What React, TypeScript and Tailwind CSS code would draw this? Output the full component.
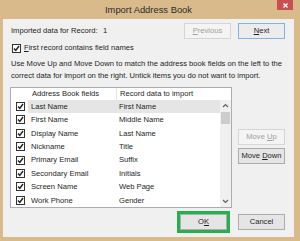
import React from "react";

const ROWS: [string, string][] = [
  ["Last Name", "First Name"],
  ["First Name", "Middle Name"],
  ["Display Name", "Last Name"],
  ["Nickname", "Title"],
  ["Primary Email", "Suffix"],
  ["Secondary Email", "Initials"],
  ["Screen Name", "Web Page"],
  ["Work Phone", "Gender"],
];

function Check() {
  return (
    <span className="flex h-[9px] w-[9px] shrink-0 items-center justify-center border border-[#333] bg-white">
      <svg width="7" height="7" viewBox="0 0 7 7">
        <path d="M1 3.5 L2.8 5.4 L6 1" fill="none" stroke="#222" strokeWidth="1.5" />
      </svg>
    </span>
  );
}

function Btn({
  label,
  u,
  disabled,
  def,
  className = "",
}: {
  label: string;
  u: number;
  disabled?: boolean;
  def?: boolean;
  className?: string;
}) {
  return (
    <div
      className={
        "flex h-[16px] w-[47px] items-center justify-center border " +
        (disabled
          ? "border-[#d5d5d5] bg-[#f4f4f4] text-[#a0a0a0] "
          : def
          ? "border-[#7eb4ea] bg-[#ececec] text-[#1e1e1e] "
          : "border-[#acacac] bg-[#e5e5e5] text-[#1e1e1e] ") +
        className
      }
    >
      <span className="whitespace-pre">
        {u < 0 ? (
          label
        ) : (
          <>
            {label.slice(0, u)}
            <span className="underline">{label[u]}</span>
            {label.slice(u + 1)}
          </>
        )}
      </span>
    </div>
  );
}

export default function App() {
  return (
    <div
      className="flex h-[241px] w-[300px] flex-col bg-[#d9ba8b] pb-[4px] pl-[3px] pr-[6px] text-[#1e1e1e]"
      style={{ fontFamily: '"Liberation Sans", Arial, sans-serif' }}
    >
      <div className="relative flex h-[19px] items-center justify-center">
        <span className="pt-[1px] text-[9.4px] text-[#2b2b2b]">Import Address Book</span>
        <div className="absolute right-[1px] top-0 flex h-[10px] w-[16px] items-center justify-center bg-[#c75050]">
          <svg width="5" height="5" viewBox="0 0 5 5">
            <path d="M0.5 0.5 L4.5 4.5 M4.5 0.5 L0.5 4.5" stroke="#fff" strokeWidth="1.3" />
          </svg>
        </div>
      </div>

      <div className="flex flex-1 flex-col bg-[#f0f0f0] pl-[7px] pr-[9px] text-[7.6px] leading-none">
        <div className="mt-[4px] flex h-[16px] items-center">
          <span className="ml-[1px] w-[92px] shrink-0 whitespace-nowrap">Imported data for Record:</span>
          <span>1</span>
          <Btn label="Previous" u={0} disabled className="ml-auto" />
          <Btn label="Next" u={0} def className="ml-[7px]" />
        </div>

        <div className="mt-[4px] flex h-[10px] items-center gap-[3px] pl-[2px]">
          <Check />
          <span>
            <span className="underline">F</span>irst record contains field names
          </span>
        </div>

        <p className="mt-[5px] whitespace-nowrap pl-[1px] leading-[11.5px]">
          Use Move Up and Move Down to match the address book fields on the left to the
          <br />
          correct data for import on the right. Untick items you do not want to import.
        </p>

        <div className="mt-[6px] flex">
          <div className="flex h-[121px] w-[222px] flex-col border border-[#abadb3] bg-white">
            <div className="flex h-[14px] items-center">
              <div className="w-[20px]" />
              <div className="flex h-full w-[86px] items-center border-r border-[#e5e5e5] pl-[1px]">
                Address Book fields
              </div>
              <div className="pl-[3px]">Record data to import</div>
            </div>
            <div className="flex flex-1">
              <div className="flex flex-1 flex-col">
                {ROWS.map(([a, b], i) => (
                  <div key={a} className="flex h-[13.4px] items-center">
                    <div className="flex w-[17px] justify-center pl-[2px]">
                      <Check />
                    </div>
                    <div
                      className={
                        "flex h-full flex-1 items-center " + (i === 0 ? "bg-[#e5e5e5]" : "")
                      }
                    >
                      <span className="w-[89px] pl-[3px]">{a}</span>
                      <span className="pl-[2px]">{b}</span>
                    </div>
                  </div>
                ))}
              </div>
              <div className="flex w-[11px] flex-col bg-[#f0f0f0]">
                <div className="flex h-[12px] items-center justify-center">
                  <svg width="7" height="5" viewBox="0 0 7 5">
                    <path d="M1 4 L3.5 1.5 L6 4" fill="none" stroke="#606060" strokeWidth="1.2" />
                  </svg>
                </div>
                <div className="mx-[1px] h-[12px] bg-[#cdcdcd]" />
                <div className="flex-1" />
                <div className="flex h-[12px] items-center justify-center">
                  <svg width="7" height="5" viewBox="0 0 7 5">
                    <path d="M1 1 L3.5 3.5 L6 1" fill="none" stroke="#606060" strokeWidth="1.2" />
                  </svg>
                </div>
              </div>
            </div>
          </div>

          <div className="ml-auto flex flex-col pt-[42px]">
            <Btn label="Move Up" u={5} disabled />
            <Btn label="Move Down" u={5} className="mt-[3px]" />
          </div>
        </div>

        <div className="mt-[3px] flex items-center">
          <div className="ml-auto border-[3px] border-[#22b14c]">
            <Btn label="OK" u={1} className="h-[14px] w-[37px]" />
          </div>
          <Btn label="Cancel" u={-1} className="ml-[8px]" />
        </div>
      </div>
    </div>
  );
}
